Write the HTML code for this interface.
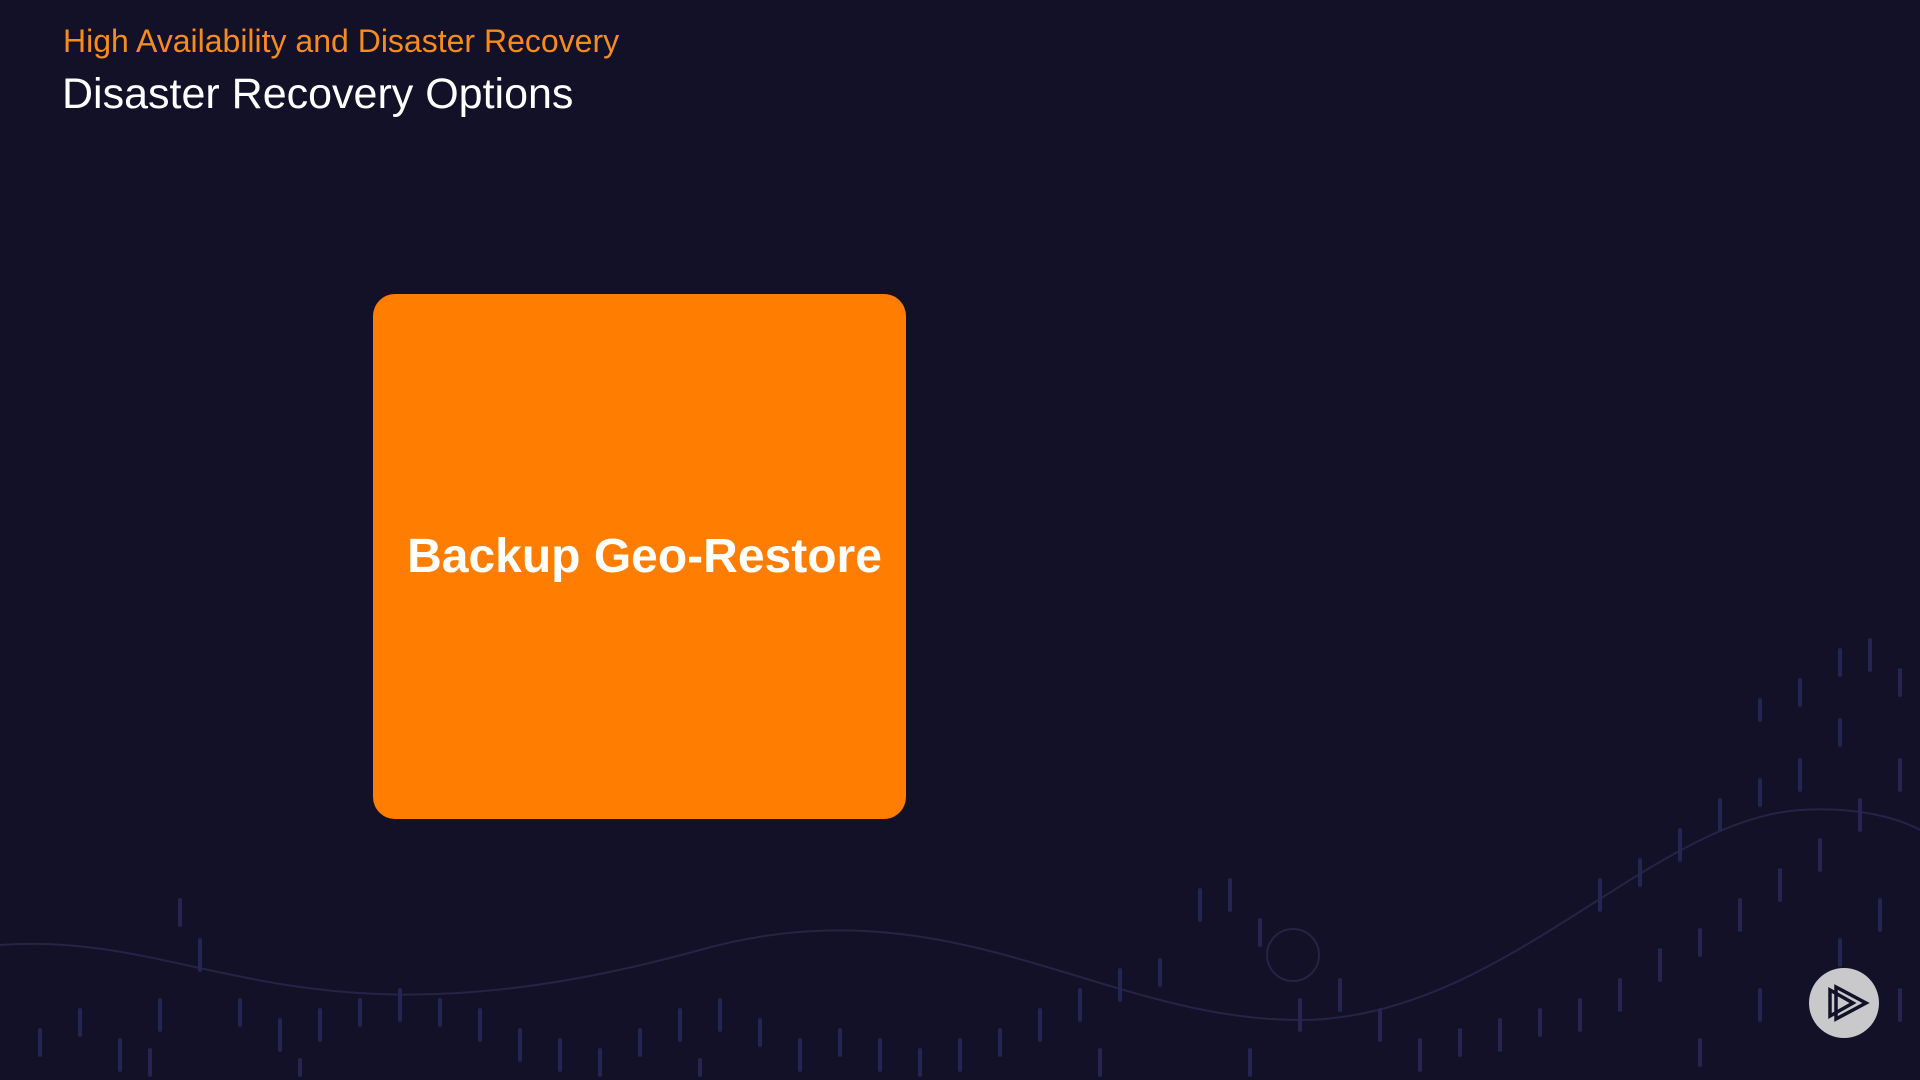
<!DOCTYPE html>
<html><head><style>
html,body{margin:0;padding:0;width:1920px;height:1080px;overflow:hidden;background:#131127;font-family:"Liberation Sans",sans-serif;}
.sub{position:absolute;left:63px;top:23px;font-size:32px;color:#f68b1f;white-space:nowrap;}
.title{position:absolute;left:62px;top:73px;font-size:43px;color:#fff;white-space:nowrap;line-height:1;}
.box{position:absolute;left:373px;top:294px;width:533px;height:525px;background:#ff7d00;border-radius:22px;display:flex;align-items:center;justify-content:center;}
.box span{color:#fff;font-weight:bold;font-size:48px;margin-left:10px;}
svg{position:absolute;left:0;top:0}
</style></head><body>
<svg width="1920" height="1080">
<path d="M0 945 C200 930 300 1060 700 950 C950 880 1100 1020 1300 1020 C1500 1020 1650 820 1800 810 C1880 805 1920 830 1920 830" stroke="#252346" stroke-width="2" fill="none"/>
<circle cx="1293" cy="955" r="26" stroke="#252346" stroke-width="2" fill="none"/>
<g stroke="#262450" stroke-width="4" stroke-linecap="round">
<path d="M1840 650v25M1870 640v30M1800 680v25M1760 700v20M1900 670v25M1840 720v25M1800 760v30M1760 780v25M1720 800v30M1680 830v30M1640 860v25M1600 880v30M1900 760v30M1860 800v30M1820 840v30M1780 870v30M1740 900v30M1700 930v25M1660 950v30M1620 980v30M1580 1000v30M1540 1010v25M1500 1020v30M1460 1030v25M1420 1040v30M1380 1010v30M1340 980v30M1300 1000v30M1260 920v25M1230 880v30M1200 890v30M1160 960v25M1120 970v30M1080 990v30M1040 1010v30M1000 1030v25M960 1040v30M920 1050v25M880 1040v30M840 1030v25M800 1040v30M760 1020v25M720 1000v30M680 1010v30M640 1030v25M600 1050v25M560 1040v30M520 1030v30M480 1010v30M440 1000v25M400 990v30M360 1000v25M320 1010v30M280 1020v30M240 1000v25M200 940v30M180 900v25M160 1000v30M120 1040v30M80 1010v25M40 1030v25M1880 900v30M1840 940v25M1900 990v30M1760 990v30M1700 1040v25M1250 1050v25M1100 1050v25M700 1060v15M300 1060v15M150 1050v25"/>
</g>
<circle cx="1844" cy="1003" r="35" fill="#c9c9cc"/>
<g fill="none" stroke="#131127" stroke-width="3.5" stroke-linejoin="miter">
<path d="M1836 987 L1866 1003 L1836 1019 Z"/>
<path d="M1830 990 L1830 1016 L1853 1003 Z"/>
</g>
</svg>
<div class="sub">High Availability and Disaster Recovery</div>
<div class="title">Disaster Recovery Options</div>
<div class="box"><span>Backup Geo-Restore</span></div>
</body></html>
